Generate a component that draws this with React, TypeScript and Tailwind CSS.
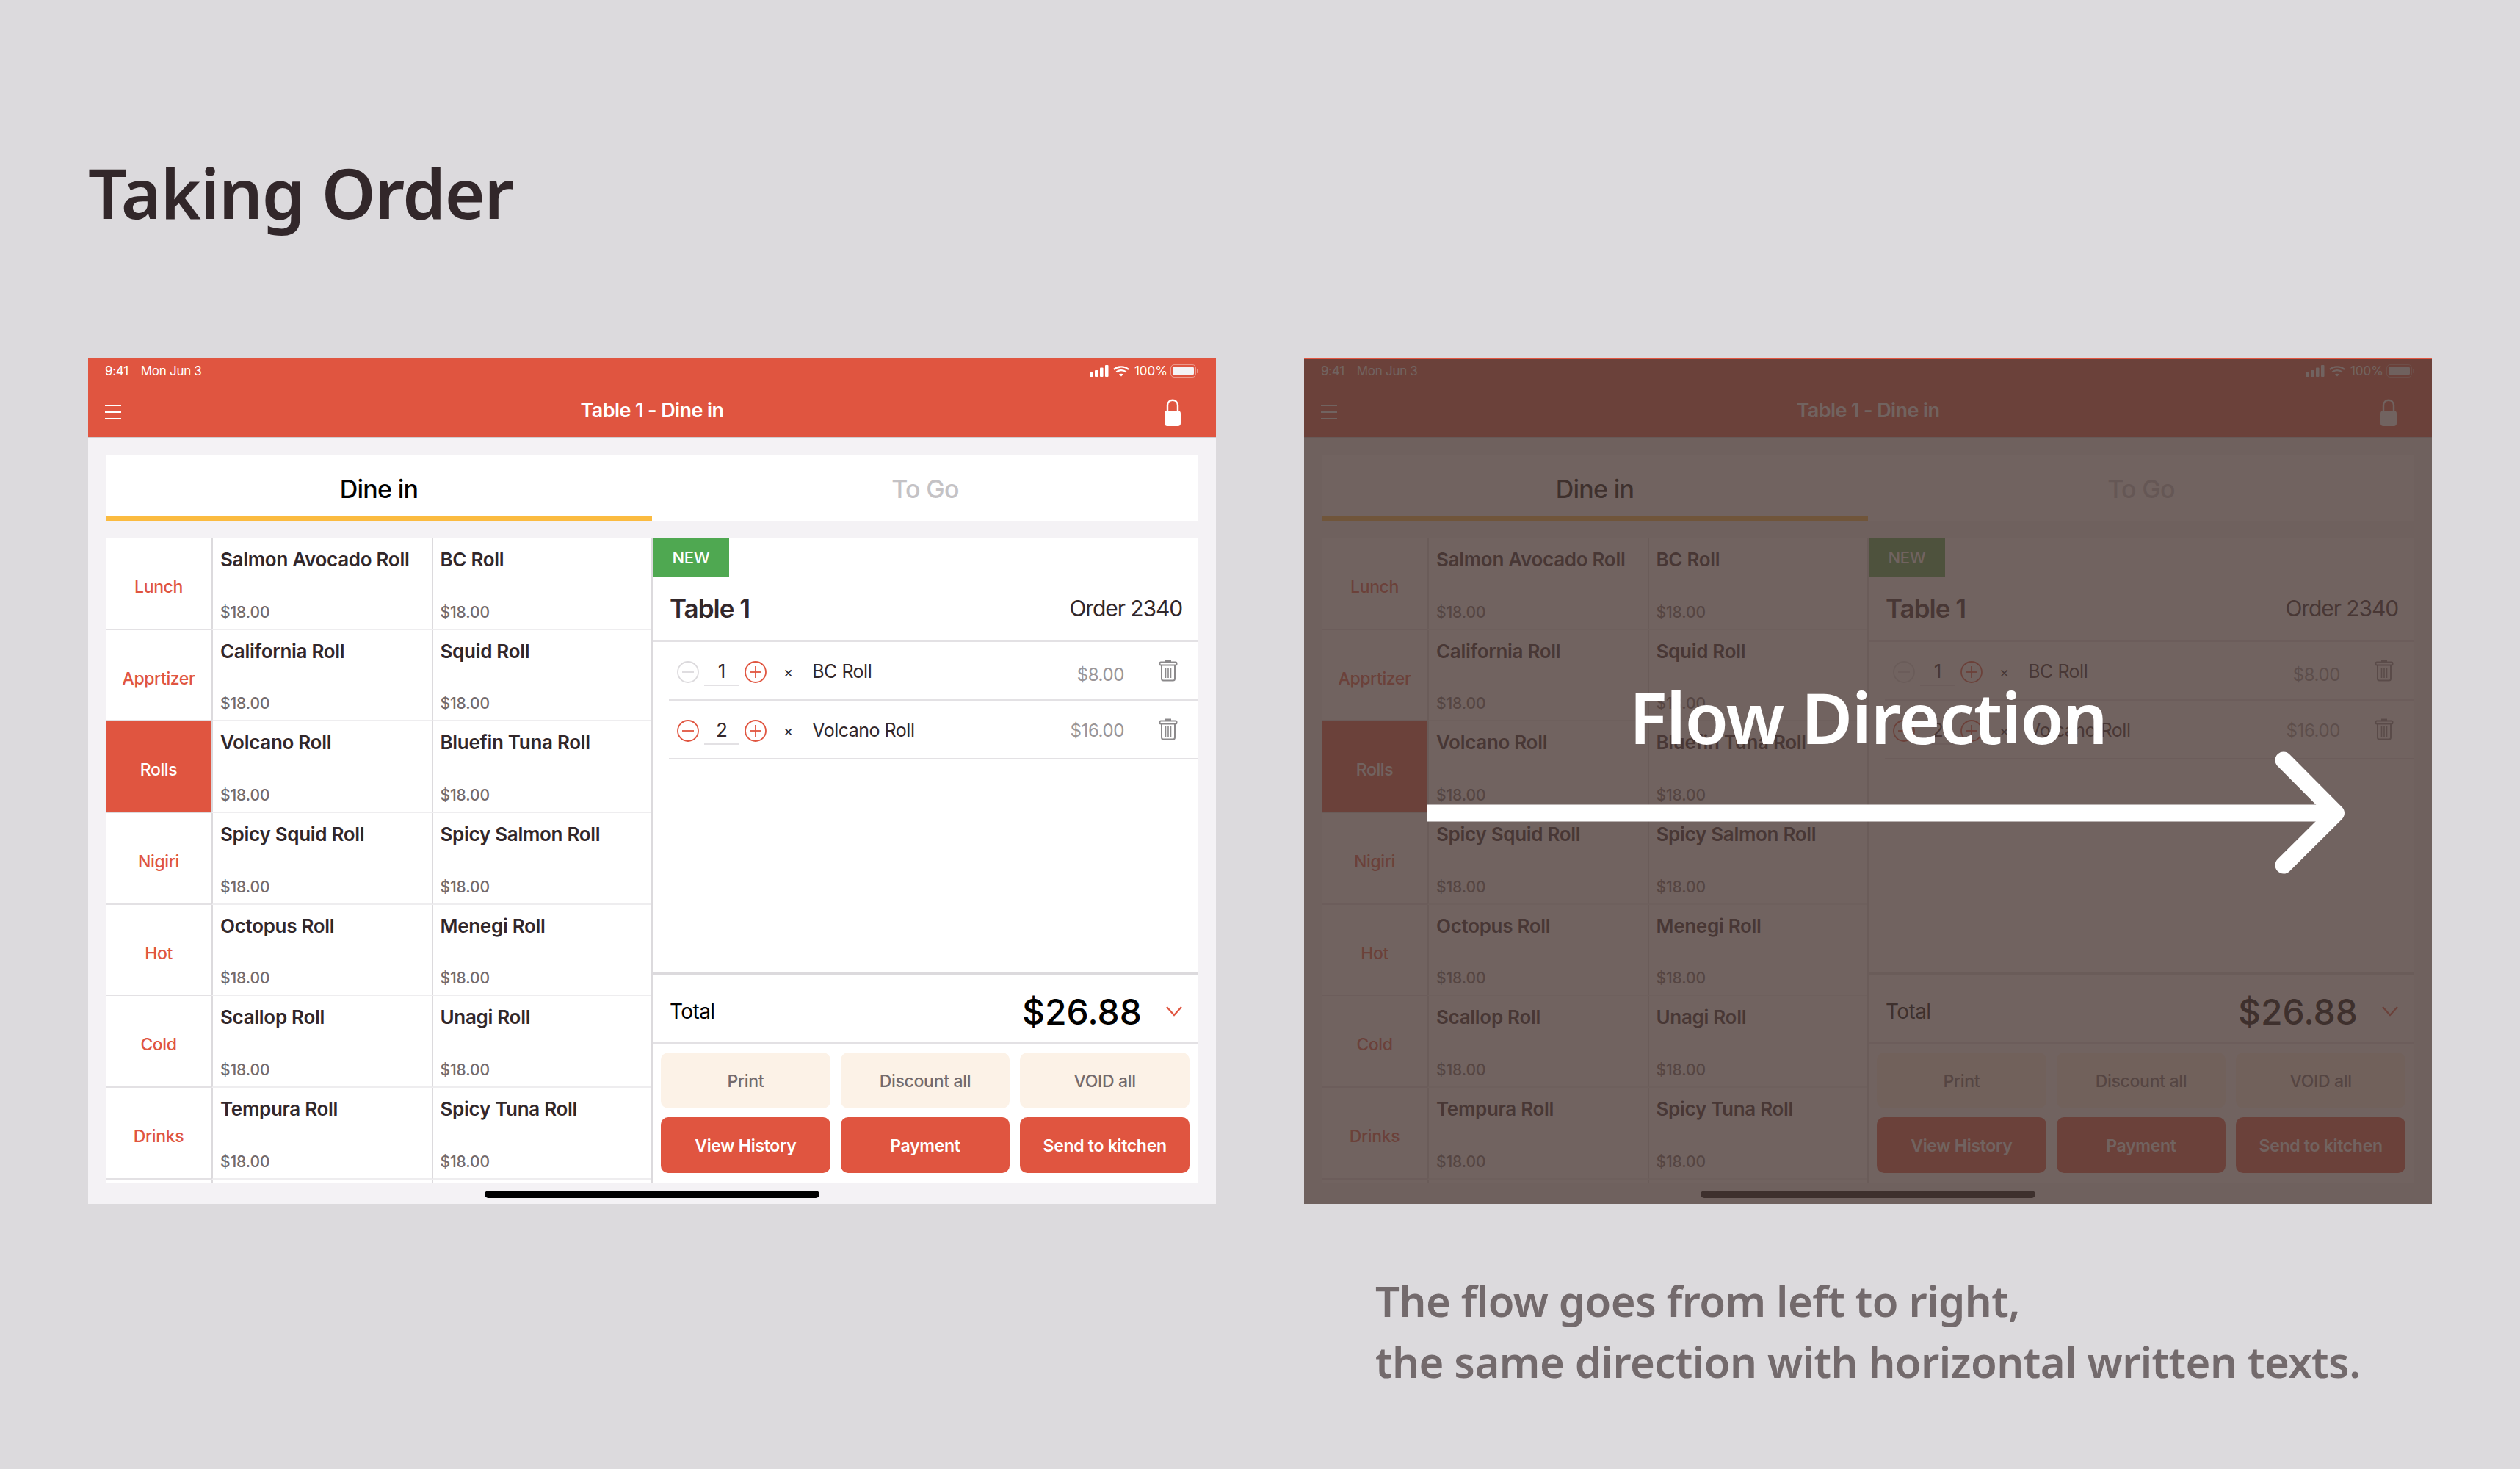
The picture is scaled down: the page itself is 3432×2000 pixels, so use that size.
import React from 'react';

const menuRows = [
  { category: 'Lunch', items: ['Salmon Avocado Roll', 'BC Roll'] },
  { category: 'Apprtizer', items: ['California Roll', 'Squid Roll'] },
  { category: 'Rolls', items: ['Volcano Roll', 'Bluefin Tuna Roll'], active: true },
  { category: 'Nigiri', items: ['Spicy Squid Roll', 'Spicy Salmon Roll'] },
  { category: 'Hot', items: ['Octopus Roll', 'Menegi Roll'] },
  { category: 'Cold', items: ['Scallop Roll', 'Unagi Roll'] },
  { category: 'Drinks', items: ['Tempura Roll', 'Spicy Tuna Roll'] },
];

const orderLines = [
  { qty: 1, name: 'BC Roll', price: '$8.00', canRemove: false },
  { qty: 2, name: 'Volcano Roll', price: '$16.00', canRemove: true },
];

const StatusIcons = () => (
  <div className="flex items-center">
    <svg width="26" height="16" viewBox="0 0 26 16" fill="white">
      <rect x="0" y="10" width="4.5" height="6" rx="1" />
      <rect x="7" y="7" width="4.5" height="9" rx="1" />
      <rect x="14" y="3.5" width="4.5" height="12.5" rx="1" />
      <rect x="21" y="0" width="4.5" height="16" rx="1" />
    </svg>
    <svg className="ml-[6px]" width="22" height="15" viewBox="0 0 22 15" fill="none" stroke="white" strokeWidth="2.4">
      <path d="M1 5 C6.5 0.2 15.5 0.2 21 5" />
      <path d="M4.4 8.4 C8 5.4 14 5.4 17.6 8.4" />
      <path d="M8 11.6 C9.8 10.4 12.2 10.4 14 11.6 L11 14.6 Z" fill="white" stroke="none" />
    </svg>
    <span className="ml-[7px] text-[17px] leading-none text-white">100%</span>
    <div className="ml-[4px] flex items-center">
      <div className="h-[18px] w-[35px] rounded-[5px] border border-white/40 p-[2px]">
        <div className="h-full w-full rounded-[3px] bg-[#f4f2f5]" />
      </div>
      <div className="ml-[1px] h-[6px] w-[2px] rounded-r-sm bg-white/40" />
    </div>
  </div>
);

const LockIcon = () => (
  <svg className="mt-[6px]" width="24" height="38" viewBox="0 0 24 38" fill="none">
    <path d="M5 18 V9 C5 -0.6 19 -0.6 19 9 V18" stroke="white" strokeWidth="2.4" />
    <rect x="1" y="16" width="22" height="21" rx="4" fill="white" />
  </svg>
);

const TrashIcon = () => (
  <svg className="mb-[4px]" width="26" height="30" viewBox="0 0 26 30" fill="none" stroke="#8b898b" strokeWidth="2">
    <path d="M10 3 V1.5 H16 V3" fill="#8b898b" />
    <rect x="1.5" y="3.5" width="23" height="4" rx="1.5" />
    <path d="M4 8 V26 C4 27.6 5 28.5 6.5 28.5 H19.5 C21 28.5 22 27.6 22 26 V8" />
    <path d="M9.5 11 V25 M13 11 V25 M16.5 11 V25" strokeWidth="1.6" />
  </svg>
);

const RoundButton = ({ plus, muted }: { plus?: boolean; muted?: boolean }) => {
  const color = muted ? '#dcdadd' : '#e05540';
  return (
    <svg width="30" height="30" viewBox="0 0 30 30" fill="none" stroke={color} strokeWidth="1.8">
      <circle cx="15" cy="15" r="14" />
      <path d="M7 15 H23" />
      {plus && <path d="M15 7 V23" />}
    </svg>
  );
};

const MenuSection = () => (
  <div className="h-full w-[743px] shrink-0 overflow-hidden">
    {[...menuRows, { category: '', items: ['', ''] }].map((row, i) => (
      <div key={i} className="flex h-[124.67px] bg-white">
        <div
          className={`flex w-[144px] items-center justify-center border-b-2 pt-[10px] text-[23px] font-medium tracking-[-0.4px] ${
            row.active
              ? 'border-[#dcdadd] bg-[#e05540] text-white'
              : 'border-[#e3e1e4] text-[#e05540]'
          }`}
        >
          {row.category}
        </div>
        {row.items.map((item, j) => (
          <div
            key={j}
            className="flex flex-1 flex-col justify-between border-b-2 border-l-2 border-b-[#eeedef] border-l-[#dcdadd] pb-[10px] pl-[10px] pt-[15px]"
          >
            <p className="text-[26px] font-semibold leading-[28px] tracking-[-0.3px] text-[#32272a]">{item}</p>
            {item && <p className="text-[21px] font-medium leading-[24px] tracking-[-0.1px] text-[#736a6c]">$18.00</p>}
          </div>
        ))}
      </div>
    ))}
  </div>
);

const OrderSection = () => (
  <div className="flex h-[877px] flex-1 flex-col border-l-2 border-[#dcdadd] bg-white">
    <div className="flex h-[53px] w-[104px] items-center justify-center bg-[#4fa851] text-[22px] font-medium tracking-[-0.4px] text-white">
      NEW
    </div>
    <div className="flex h-[86px] items-center justify-between pb-[2px] pl-[23px] pr-[22px] text-[#32272a]">
      <span className="text-[35px] font-semibold tracking-[-1px]">Table 1</span>
      <span className="text-[30px] tracking-[-1.1px]">Order 2340</span>
    </div>
    <div className="border-t-2 border-[#e3e1e4]">
      {orderLines.map((line) => (
        <div key={line.name} className="ml-[22px] flex h-[80px] items-center border-b-2 border-[#e3e1e4] pl-[11px] pr-[28px] pt-[3px]">
          <RoundButton muted={!line.canRemove} />
          <div className="mx-[7px] flex h-[38px] w-[48px] items-center justify-center border-b-2 border-[#e3e1e4] text-[26px] leading-none text-[#32272a]">
            {line.qty}
          </div>
          <RoundButton plus />
          <span className="ml-[23px] text-[20px] leading-none text-[#32272a]">×</span>
          <span className="ml-[26px] flex-1 text-[25px] tracking-[-0.5px] text-[#32272a]">{line.name}</span>
          <span className={`mr-[47px] text-[24px] tracking-[-0.4px] text-[#9a9698] ${line.canRemove ? '' : 'mt-[8px]'}`}>{line.price}</span>
          <TrashIcon />
        </div>
      ))}
    </div>
    <div className="mt-auto border-t-4 border-[#dcdadd]">
      <div className="flex h-[94px] items-center border-b-2 border-[#e3e1e4] pl-[23px] pr-[22px] pt-[7px] text-black">
        <span className="flex-1 text-[28px] tracking-[-0.6px]">Total</span>
        <span className="pt-[2px] text-[48px] font-medium leading-none">$26.88</span>
        <svg className="ml-[33px]" width="22" height="14" viewBox="0 0 22 14" fill="none" stroke="#e05540" strokeWidth="2.2">
          <path d="M1 1 L11 12 L21 1" />
        </svg>
      </div>
      <div className="grid grid-cols-3 gap-x-[14px] gap-y-[12px] pb-[13px] pl-[11px] pr-[12px] pt-[12px]">
        {['Print', 'Discount all', 'VOID all'].map((label) => (
          <div key={label} className="flex h-[76px] items-center justify-center rounded-[10px] bg-[#fcf2e7] pt-[2px] text-[23px] font-medium tracking-[-0.3px] text-[#736a6c]">
            {label}
          </div>
        ))}
        {['View History', 'Payment', 'Send to kitchen'].map((label) => (
          <div key={label} className="flex h-[76px] items-center justify-center rounded-[10px] bg-[#e05540] pt-[2px] text-[23px] font-semibold tracking-[-0.3px] text-white">
            {label}
          </div>
        ))}
      </div>
    </div>
  </div>
);

const Tablet = ({ children }: { children?: React.ReactNode }) => (
  <div className="relative h-[1152px] w-[1536px] bg-[#f4f2f5] font-['Inter',sans-serif]">
    <header className="h-[109px] border-b border-[#cfcdd0] bg-[#e05540] text-white">
      <div className="flex h-[36px] items-center justify-between pl-[23px] pr-[24px] text-[17px]">
        <div className="flex gap-[17px] pt-[2px] tracking-[-0.3px]">
          <span>9:41</span>
          <span>Mon Jun 3</span>
        </div>
        <StatusIcons />
      </div>
      <div className="flex h-[72px] items-center pl-[23px] pr-[47px]">
        <div className="w-[100px]">
          <div className="mt-[4px] flex w-[22px] flex-col gap-[7px]">
            <div className="h-[2px] bg-white" />
            <div className="h-[2px] bg-white" />
            <div className="h-[2px] bg-white" />
          </div>
        </div>
        <span className="flex-1 text-center text-[27px] font-semibold tracking-[-0.6px]">Table 1 - Dine in</span>
        <div className="flex w-[76px] justify-end">
          <LockIcon />
        </div>
      </div>
    </header>
    <div className="px-[24px] pt-[23px]">
      <div className="flex h-[90px] bg-white text-[34px] tracking-[-0.7px]">
        <div className="flex flex-1 items-center justify-center border-b-[7px] border-[#fbbb40] pt-[9px] font-medium text-black">Dine in</div>
        <div className="flex flex-1 items-center justify-center pt-[3px] font-medium text-[#c4c2c5]">To Go</div>
      </div>
      <div className="mt-[24px] flex h-[878px]">
        <MenuSection />
        <OrderSection />
      </div>
    </div>
    <div className="mx-auto mt-[10px] h-[10px] w-[456px] rounded-full bg-black" />
    {children}
  </div>
);

export default function App() {
  return (
    <div className="h-[2000px] w-[3432px] overflow-hidden bg-[#dcdadd] pl-[120px] font-['Noto_Sans',sans-serif]">
      <h1 className="h-[487px] pt-[197px] text-[94px] font-semibold leading-[130px] tracking-[-1.2px] text-[#32272a]">Taking Order</h1>
      <div className="flex gap-[120px]">
        <Tablet />
        <div>
          <Tablet>
            <div className="absolute inset-x-0 bottom-0 top-[2px] bg-[#4e3c38]/80" />
            <p className="absolute inset-x-0 top-[429px] text-center font-['Noto_Sans',sans-serif] text-[96px] font-semibold leading-[120px] tracking-[-1.3px] text-white">
              Flow Direction
            </p>
            <svg className="absolute left-[168px] top-[533px]" width="1260" height="174" viewBox="0 0 1260 174" fill="none" stroke="white" strokeWidth="23" strokeLinecap="round" strokeLinejoin="round">
              <path d="M0 87 H1230" strokeLinecap="butt" />
              <path d="M1166 15 L1237.5 87 L1166 158" />
            </svg>
          </Tablet>
          <p className="mt-[90px] pl-[97px] text-[58px] font-semibold leading-[83px] tracking-[-0.55px] text-[#736a6c]">
            The flow goes from left to right,
            <br />
            the same direction with horizontal written texts.
          </p>
        </div>
      </div>
    </div>
  );
}
